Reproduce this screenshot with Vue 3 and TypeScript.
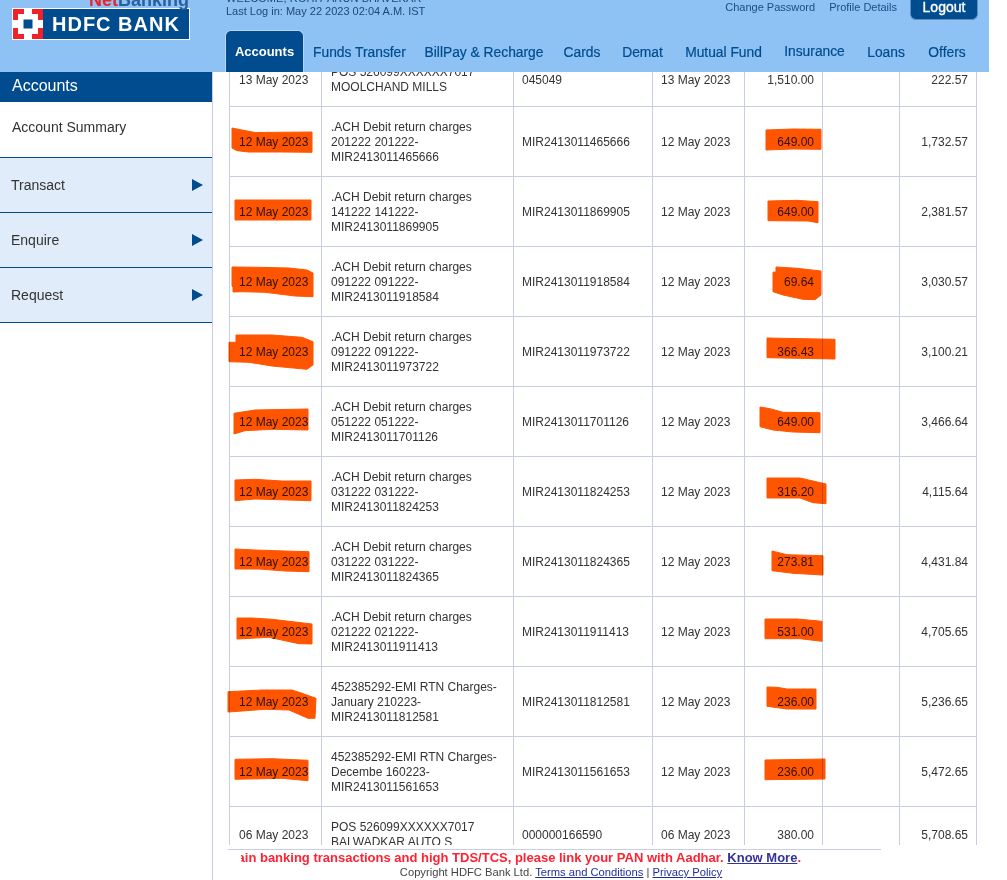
<script setup lang="ts">
interface Row {
  date: string
  lines: string[]
  ref: string
  value: string
  debit: string
  balance: string
}

const ach = (a: string, ref: string): string[] => ['.ACH Debit return charges', `${a}-`, ref]
const may12 = '12 May 2023'

const rows: Row[] = [
  { date: '13 May 2023', lines: ['POS 526099XXXXXX7017', 'MOOLCHAND MILLS'], ref: '045049', value: '13 May 2023', debit: '1,510.00', balance: '222.57' },
  { date: may12, lines: ach('201222 201222', 'MIR2413011465666'), ref: 'MIR2413011465666', value: may12, debit: '649.00', balance: '1,732.57' },
  { date: may12, lines: ach('141222 141222', 'MIR2413011869905'), ref: 'MIR2413011869905', value: may12, debit: '649.00', balance: '2,381.57' },
  { date: may12, lines: ach('091222 091222', 'MIR2413011918584'), ref: 'MIR2413011918584', value: may12, debit: '69.64', balance: '3,030.57' },
  { date: may12, lines: ach('091222 091222', 'MIR2413011973722'), ref: 'MIR2413011973722', value: may12, debit: '366.43', balance: '3,100.21' },
  { date: may12, lines: ach('051222 051222', 'MIR2413011701126'), ref: 'MIR2413011701126', value: may12, debit: '649.00', balance: '3,466.64' },
  { date: may12, lines: ach('031222 031222', 'MIR2413011824253'), ref: 'MIR2413011824253', value: may12, debit: '316.20', balance: '4,115.64' },
  { date: may12, lines: ach('031222 031222', 'MIR2413011824365'), ref: 'MIR2413011824365', value: may12, debit: '273.81', balance: '4,431.84' },
  { date: may12, lines: ach('021222 021222', 'MIR2413011911413'), ref: 'MIR2413011911413', value: may12, debit: '531.00', balance: '4,705.65' },
  { date: may12, lines: ['452385292-EMI RTN Charges-', 'January 210223-', 'MIR2413011812581'], ref: 'MIR2413011812581', value: may12, debit: '236.00', balance: '5,236.65' },
  { date: may12, lines: ['452385292-EMI RTN Charges-', 'Decembe 160223-', 'MIR2413011561653'], ref: 'MIR2413011561653', value: may12, debit: '236.00', balance: '5,472.65' },
  { date: '06 May 2023', lines: ['POS 526099XXXXXX7017', 'BALWADKAR AUTO S'], ref: '000000166590', value: '06 May 2023', debit: '380.00', balance: '5,708.65' },
]

const tabs = ['Accounts', 'Funds Transfer', 'BillPay & Recharge', 'Cards', 'Demat', 'Mutual Fund', 'Insurance', 'Loans', 'Offers']
const menu = ['Transact', 'Enquire', 'Request']

// Hand-drawn highlighter strokes, in page coordinates.
const marks: string[] = [
  '232,128 242,130 255,132.5 312,132 312,152.3 282,152 249,152 237,150.7 232,148',
  '235,200 311,200 311,220 235,220',
  '232,267 259,267.3 289,268 307,270 313,273 313,296.7 295,296 265,292.3 242,291.7 233,292 233,287 232,286',
  '236,335 236,342.3 229,342.3 229,361.7 249,362.3 272,366 307,369.3 313,365 313,341.7 302,337.3 272,335',
  '234,413.3 255,410 308,409 308,430 272,429.3 245,430.7 234,434',
  '235,480 255,479.3 282,481 311,481 311,500.7 289,500 255,499 235,500.7',
  '235,549 255,550 285,551 309,551.7 309,571.7 285,571 259,569 235,569',
  '237,618 252,618 272,619.3 312,624 312,644 299,643.7 269,637.3 237,639',
  '228,691.7 262,690 292,690 302,693.3 316,698.3 315,718.3 308,718.3 289,710 265,709.3 242,711 228,712',
  '235,759.3 272,758.7 308,760.3 308,780.7 282,778.3 235,779.3',
  '766,130 793,129 821,129.3 821,149.3 793,149 766,150',
  '768,201 797,200.3 818,201.7 818,222.7 808,221 768,220.7',
  '776,267 797,268.3 821,271 821,295 815,299.7 803,299.3 783,295 773,291.7 773,272.3 776,272',
  '767,338 835,339.3 835,359 767,357.7',
  '760,407 770,408.7 783,412.3 820,412.7 820,432.7 793,432 773,430 760,426.7',
  '767,478 800,478 826,484 826,503.7 813,502.7 800,498 767,498',
  '772,551 787,554.7 823,555.7 823,575 793,573.3 772,570.7',
  '765,619 797,619 822,621.3 822,641.3 800,638.7 765,638.7',
  '767,687 777,687.3 787,689 816,689 816,709 787,709 767,706.3',
  '765,760 825,759 825,779 765,779.7',
]
</script>

<template>
  <div class="page">
    <header class="top">
      <div class="brand">
        <div class="netbanking"><span class="net">Net</span>Banking</div>
        <div class="logo">
          <svg class="logo-mark" viewBox="0 0 30 30" aria-hidden="true">
            <rect width="30" height="30" fill="#ed232a" />
            <path d="M11 0h8v5h6v6h5v8h-5v6h-6v5h-8v-5H5v-6H0v-8h5V5h6z" fill="#fff" />
            <rect x="10.5" y="10.5" width="9" height="9" fill="#004c8f" />
          </svg>
          <span class="logo-text">HDFC BANK</span>
        </div>
      </div>
      <div class="top-main">
        <div class="util">
          <div class="login">
            <div class="welcome">WELCOME, ROHIT ARUN BHAVEKAR</div>
            <div>Last Log in: May 22 2023 02:04 A.M. IST</div>
          </div>
          <div class="links">
            <a>Change Password</a>
            <a>Profile Details</a>
            <button class="logout">Logout</button>
          </div>
        </div>
        <nav class="tabs">
          <a v-for="(t, i) in tabs" :key="t" class="tab" :class="{ active: i === 0, raised: t === 'Insurance' }">{{ t }}</a>
        </nav>
      </div>
    </header>

    <div class="body">
      <aside class="side">
        <h2 class="side-title">Accounts</h2>
        <div class="summary">Account Summary</div>
        <div v-for="m in menu" :key="m" class="menu-item">
          <span>{{ m }}</span>
          <i class="arrow"></i>
        </div>
      </aside>

      <main class="content">
        <div class="scroller">
          <table class="ledger">
            <colgroup>
              <col class="c-date" />
              <col class="c-desc" />
              <col class="c-ref" />
              <col class="c-val" />
              <col class="c-deb" />
              <col class="c-cre" />
              <col class="c-bal" />
            </colgroup>
            <tbody>
              <tr v-for="(r, i) in rows" :key="i" :class="{ first: i === 0, last: i === rows.length - 1 }">
                <td class="date">{{ r.date }}</td>
                <td class="desc"><div v-for="l in r.lines" :key="l">{{ l }}</div></td>
                <td class="ref">{{ r.ref }}</td>
                <td class="val">{{ r.value }}</td>
                <td class="num">{{ r.debit }}</td>
                <td class="num"></td>
                <td class="num">{{ r.balance }}</td>
              </tr>
            </tbody>
          </table>
          <svg class="marks" viewBox="213 72 776 773" aria-hidden="true">
            <polygon v-for="(m, i) in marks" :key="i" :points="m" fill="#ff5500" stroke="#ff5500" stroke-width="1" stroke-linejoin="round" />
          </svg>
        </div>
        <footer class="foot">
          <div class="notice">
            <div class="ticker">
              <span>To avoid higher charges on certain banking transactions and high TDS/TCS, please link your PAN with Aadhar. <a>Know More</a>.</span>
            </div>
          </div>
          <div class="copy">Copyright HDFC Bank Ltd. <a>Terms and Conditions</a> | <a>Privacy Policy</a></div>
        </footer>
      </main>
    </div>
  </div>
</template>

<style>
html, body { margin: 0; background: #fff; overflow: hidden; }
</style>

<style scoped>
.page {
  width: 1007px;
  height: 880px;
  overflow: hidden;
  font-family: "Liberation Sans", Arial, sans-serif;
  color: #333;
  background: #fff;
}
.top {
  width: 989px;
  height: 72px;
  background: #8ec2f4;
  display: flex;
  overflow: hidden;
}
.brand { width: 225px; flex: none; padding-left: 12px; box-sizing: border-box; }
.netbanking {
  width: 177px;
  height: 8px;
  text-align: right;
  font-size: 18px;
  font-weight: bold;
  line-height: 0;
  color: #2a5f9e;
}
.net { color: #ed232a; }
.logo {
  width: 178px;
  height: 32px;
  box-sizing: border-box;
  border: 1px solid #fff;
  background: #004c8f;
  display: flex;
  align-items: center;
}
.logo-mark { width: 30px; height: 30px; flex: none; display: block; }
.logo-text {
  margin-left: 9px;
  color: #fff;
  font-size: 20px;
  font-weight: bold;
  letter-spacing: 1px;
  white-space: nowrap;
}
.top-main { flex: 1; min-width: 0; display: flex; flex-direction: column; }
.util { height: 30px; display: flex; justify-content: space-between; padding-left: 1px; }
.login { font-size: 11px; line-height: 13px; color: #23477a; margin-top: -8px; }
.welcome { white-space: nowrap; letter-spacing: 0.1px; }
.links { display: flex; align-items: flex-start; margin-right: 11px; font-size: 11px; color: #1c4b86; }
.links a { line-height: 14px; margin-right: 14px; }
.logout {
  width: 68px;
  height: 20px;
  margin: 0 0 0 -1px;
  padding: 0 0 5px;
  border: 1px solid #5c8fc4;
  border-top: 0;
  border-radius: 0 0 6px 6px;
  background: #004c8f;
  color: #fff;
  font: 14px/14px "Liberation Sans", Arial, sans-serif;
  -webkit-text-stroke: 0.35px #fff;
}
.tabs {
  height: 42px;
  display: grid;
  grid-template-columns: 79px 111px 138px 58px 63px 99px 83px 60px 62px;
}
.tab {
  display: flex;
  align-items: center;
  justify-content: center;
  font-size: 13.8px;
  color: #004c8f;
  white-space: nowrap;
  padding-top: 2px;
  box-sizing: border-box;
  -webkit-text-stroke: 0.2px #004c8f;
}
.tab.raised { padding-top: 0; }
.tab.active {
  background: #004c8f;
  color: #fff;
  font-size: 13px;
  font-weight: bold;
  padding-top: 0;
  -webkit-text-stroke: 0;
  border: 1px solid #b9d6f3;
  border-bottom: 0;
  border-radius: 6px 6px 0 0;
}
.body { display: flex; height: 808px; }
.side {
  width: 213px;
  flex: none;
  box-sizing: border-box;
  border-right: 1px solid #c9cde0;
}
.side-title {
  margin: 0;
  height: 30px;
  padding-left: 12px;
  background: #004c8f;
  color: #fff;
  font-size: 16px;
  font-weight: normal;
  line-height: 27px;
}
.summary {
  height: 56px;
  box-sizing: border-box;
  padding: 16px 0 0 12px;
  font-size: 14px;
  line-height: 18px;
  border-bottom: 1px solid #004c8f;
}
.menu-item {
  height: 55px;
  box-sizing: border-box;
  padding: 0 9px 0 11px;
  display: flex;
  align-items: center;
  justify-content: space-between;
  background: #e0ecf9;
  border-bottom: 1px solid #004c8f;
  font-size: 14px;
}
.arrow {
  width: 0;
  height: 0;
  border-left: 11px solid #004c8f;
  border-top: 6px solid transparent;
  border-bottom: 6px solid transparent;
}
.content { flex: 1; min-width: 0; display: flex; flex-direction: column; }
.scroller {
  position: relative;
  width: 776px;
  height: 773px;
  overflow: hidden;
  flex: none;
  padding-left: 16px;
  box-sizing: border-box;
}
.ledger {
  border-collapse: collapse;
  table-layout: fixed;
  width: 748px;
  margin-top: -19px;
  font-size: 12px;
  line-height: 15px;
  color: #333;
}
.c-date { width: 92px; }
.c-desc { width: 192px; }
.c-ref { width: 139px; }
.c-val { width: 92px; }
.c-deb { width: 78px; }
.c-cre { width: 77px; }
.c-bal { width: 77px; }
.ledger td {
  border: 1px solid #c9cde0;
  height: 70px;
  box-sizing: border-box;
  padding: 2px 8px 0;
  vertical-align: middle;
  white-space: nowrap;
  overflow: hidden;
}
.ledger tr.first td { height: 53px; padding-top: 0; }
.ledger tr.last td { height: 57px; padding-top: 0; }
.ledger td.date { padding-left: 9px; }
.ledger td.desc { padding-left: 9px; }
.ledger td.num { text-align: right; }
.marks {
  position: absolute;
  left: 0;
  top: 0;
  width: 776px;
  height: 773px;
  mix-blend-mode: multiply;
  pointer-events: none;
}
.foot { flex: 1; min-height: 0; }
.notice {
  margin-left: 15px;
  width: 653px;
  box-sizing: border-box;
  margin-top: 4px;
  border-top: 1px solid #c9cde0;
  padding: 1px 80px 0 13px;
}
.ticker {
  height: 14px;
  display: flex;
  justify-content: flex-end;
  overflow: hidden;
  white-space: nowrap;
  font-size: 13px;
  line-height: 14px;
  font-weight: bold;
  color: #ff2233;
}
.ticker span { flex: none; }
.ticker a { color: #333399; text-decoration: underline; }
.copy {
  width: 696px;
  text-align: center;
  font-size: 11.2px;
  line-height: 14px;
  margin-top: 0;
  color: #444;
}
.copy a { color: #1f2f99; text-decoration: underline; }
</style>
